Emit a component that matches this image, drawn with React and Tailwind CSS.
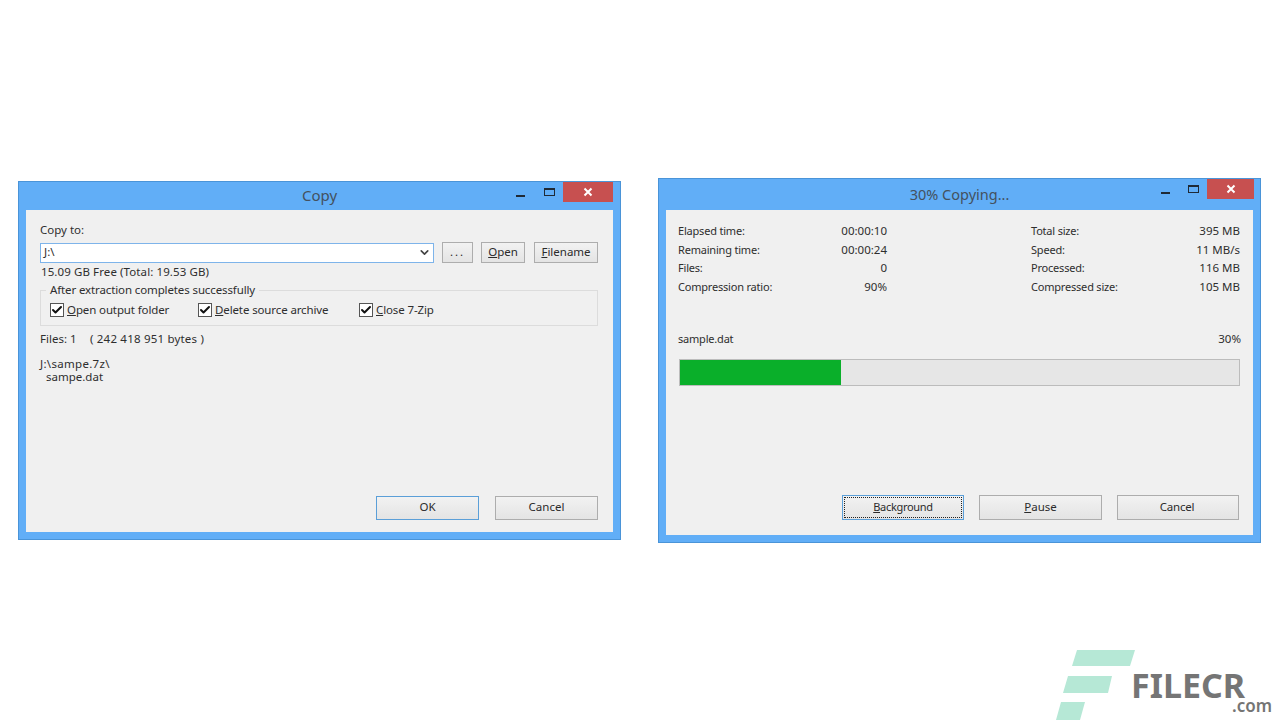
import { Check, ChevronDown } from 'lucide-react'

const font = "font-['Noto_Sans',sans-serif]"

function TitleBar({ title, minMr, maxMr, closeW, h, titleClass }) {
  return (
    <div className={`relative flex items-center justify-center bg-[#61aef7] ${h}`}>
      <span className={`leading-none text-[#44515e] ${titleClass}`}>{title}</span>
      <div className="absolute right-0 top-0 flex items-start">
        <span className={`mt-[13px] h-[2px] w-[9px] bg-[#1f2a36] ${minMr}`} />
        <span className={`mt-[6px] h-[8px] w-[11px] border border-t-2 border-[#1f2a36] ${maxMr}`} />
        <span className={`flex h-[20px] items-center justify-center bg-[#c75050] ${closeW}`}>
          <svg width="10" height="10" viewBox="0 0 10 10">
            <path d="M1.5 1.5l7 7M8.5 1.5l-7 7" stroke="#fff" strokeWidth="2" />
          </svg>
        </span>
      </div>
    </div>
  )
}

function Btn({ className, focus, children }) {
  return (
    <div className={`flex items-center justify-center border bg-gradient-to-b from-[#f2f2f2] to-[#e4e4e4] text-[11.5px] text-[#2b2b2b] ${focus ? 'border-[#5b9fd8]' : 'border-[#adadad]'} ${className}`}>
      {children}
    </div>
  )
}

function Tick({ className, children }) {
  return (
    <div className={`flex items-center ${className}`}>
      <span className="flex h-[14px] w-[14px] items-center justify-center border border-[#555] bg-white">
        <Check size={12} strokeWidth={4} className="text-[#111]" />
      </span>
      <span className="ml-[3px] tracking-[-0.12px]">{children}</span>
    </div>
  )
}

function CopyWindow() {
  return (
    <div className="absolute left-[18px] top-[181px] flex h-[359px] w-[603px] flex-col border border-[#4a94d8] bg-[#61aef7]">
      <TitleBar title="Copy" h="h-[27px] pb-px" titleClass="text-[15px]" minMr="mr-[19px]" maxMr="mr-[8px]" closeW="w-[50px] mr-[7px]" />
      <div className="mx-[7px] mt-px flex h-[322px] flex-col bg-[#f0f0f0] px-[14px] text-[11.5px] leading-[16px] text-[#2e2e2e]">
        <div className="mt-[12px] h-[16px]">Copy to:</div>
        <div className="mt-[4px] flex h-[21px] items-center">
          <div className="flex h-[20px] w-[394px] items-center justify-between border border-[#7eb4ea] bg-white pb-px pl-[3px] pr-[2px]">
            <span>J:\</span>
            <ChevronDown size={13} strokeWidth={3} className="text-[#444]" />
          </div>
          <Btn className="ml-[8px] h-[21px] w-[31px] pb-px tracking-[2px]">...</Btn>
          <Btn className="ml-[8px] h-[21px] w-[44px] pb-px"><span><u>O</u>pen</span></Btn>
          <Btn className="ml-[9px] h-[21px] w-[64px] pb-px"><span><u>F</u>ilename</span></Btn>
        </div>
        <div className="ml-px mt-[1px] h-[16px] tracking-[0.1px]">15.09 GB Free (Total: 19.53 GB)</div>
        <div className="relative mt-[10px] flex h-[36px] w-[558px] items-center border border-[#dcdcdc] pl-[9px]">
          <span className="absolute -top-[9px] left-[5px] bg-[#f0f0f0] px-[4px] tracking-[-0.12px]">After extraction completes successfully</span>
          <Tick className="mt-[3px] w-[148px]"><u>O</u>pen output folder</Tick>
          <Tick className="mt-[3px] w-[161px]"><u>D</u>elete source archive</Tick>
          <Tick className="mt-[3px]"><u>C</u>lose 7-Zip</Tick>
        </div>
        <div className="mt-[5px] flex h-[16px]">
          <span className="w-[50px]">Files: 1</span>
          <span className="tracking-[0.2px]">( 242 418 951 bytes )</span>
        </div>
        <div className="mt-[11px] h-[12px] leading-[12px] tracking-[0.3px]">J:\sampe.7z\</div>
        <div className="ml-[6px] h-[13px] leading-[13px]">sampe.dat</div>
        <div className="mb-[12px] mt-auto flex justify-end gap-[16px] pr-px">
          <Btn focus className="h-[24px] w-[103px] pb-[2px]">OK</Btn>
          <Btn className="h-[24px] w-[103px] pb-[2px]">Cancel</Btn>
        </div>
      </div>
    </div>
  )
}

function StatColumn({ rows, className }) {
  return (
    <div className={className}>
      {rows.map(([label, value]) => (
        <div key={label} className="flex h-[18.6px] items-center justify-between">
          <span className="text-[11px] tracking-[-0.2px]">{label}</span>
          <span>{value}</span>
        </div>
      ))}
    </div>
  )
}

function ProgressWindow() {
  return (
    <div className="absolute left-[658px] top-[178px] flex h-[365px] w-[603px] flex-col border border-[#4a94d8] bg-[#61aef7]">
      <TitleBar title="30% Copying..." h="h-[31px]" titleClass="text-[14.5px]" minMr="mr-[18px]" maxMr="mr-[8px]" closeW="w-[47px] mr-[6px]" />
      <div className="mx-[7px] flex h-[325px] flex-col bg-[#f0f0f0] px-[12px] text-[11.5px] leading-[16px] text-[#2e2e2e]">
        <div className="mt-[12px] flex">
          <StatColumn
            className="w-[209px]"
            rows={[['Elapsed time:', '00:00:10'], ['Remaining time:', '00:00:24'], ['Files:', '0'], ['Compression ratio:', '90%']]}
          />
          <StatColumn
            className="ml-[144px] w-[209px]"
            rows={[['Total size:', '395 MB'], ['Speed:', '11 MB/s'], ['Processed:', '116 MB'], ['Compressed size:', '105 MB']]}
          />
        </div>
        <div className="mt-[35px] flex h-[16px] items-center justify-between">
          <span className="text-[11px] tracking-[-0.2px]">sample.dat</span>
          <span>30%</span>
        </div>
        <div className="ml-px mt-[12px] h-[27px] w-[561px] border border-[#bcbcbc] bg-[#e6e6e6]">
          <div className="h-full w-[161px] bg-[#0aaf2a]" />
        </div>
        <div className="mb-[15px] mt-auto flex justify-end gap-[15px] pr-[2px]">
          <Btn focus className="h-[25px] w-[122px] pb-px">
            <span className="flex h-[21px] w-[118px] items-center justify-center border border-dotted border-[#222] text-[11px] tracking-[-0.3px]"><span><u>B</u>ackground</span></span>
          </Btn>
          <Btn className="h-[25px] w-[123px] pb-px"><span><u>P</u>ause</span></Btn>
          <Btn className="h-[25px] w-[122px] pb-px pr-[2px] tracking-[-0.2px]">Cancel</Btn>
        </div>
      </div>
    </div>
  )
}

function Logo() {
  return (
    <div className="absolute left-[1056px] top-[650px] h-[70px] w-[224px]">
      <svg width="80" height="70" viewBox="1056 650 80 70" className="absolute left-0 top-0">
        <path d="M1077 650h58l-5 16h-58zM1068 676h44l-4 17h-45zM1061 702h24l-5 18h-24z" fill="#b6e8d6" />
      </svg>
      <span className="absolute left-[75px] top-[22px] text-[34px] font-bold leading-[26px] text-[#757575]">FILECR</span>
      <span className="absolute left-[176px] top-[49px] text-[17px] font-semibold leading-[14px] text-[#757575]">.com</span>
    </div>
  )
}

export default function App() {
  return (
    <div className={`relative h-[720px] w-[1280px] overflow-hidden bg-white ${font}`}>
      <CopyWindow />
      <ProgressWindow />
      <Logo />
    </div>
  )
}
